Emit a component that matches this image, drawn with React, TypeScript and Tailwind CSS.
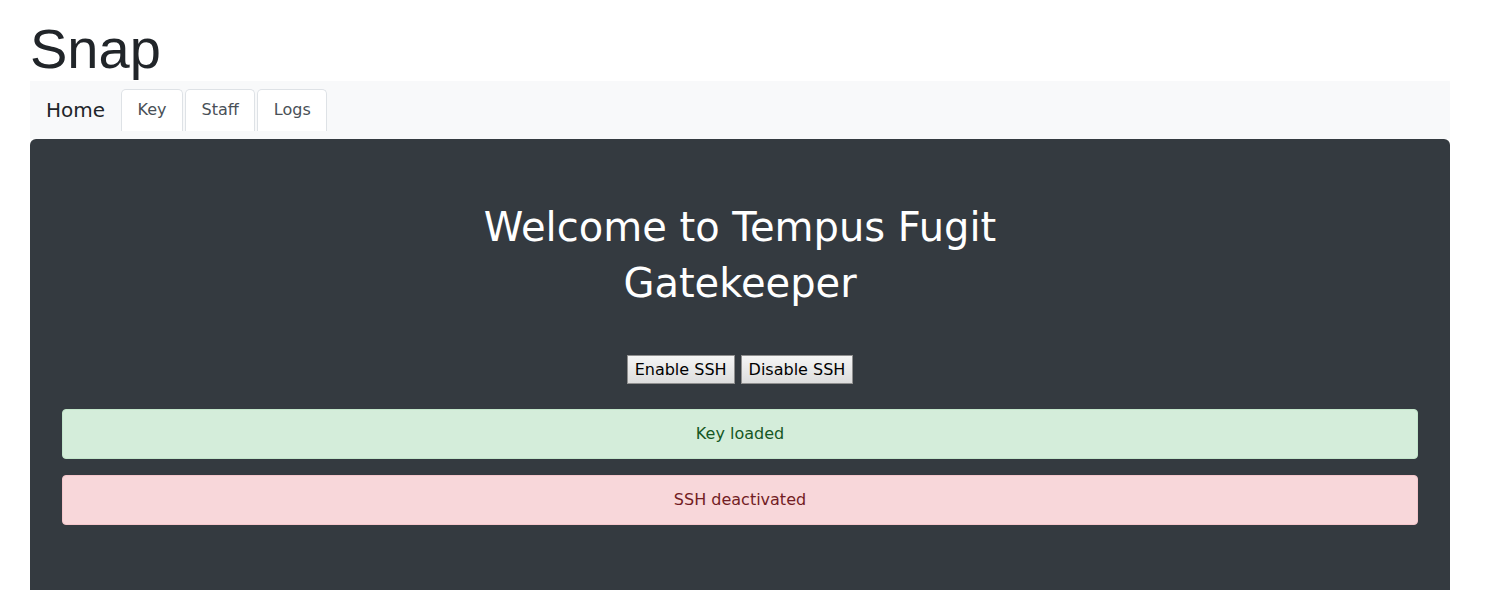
const tabs = ["Key", "Staff", "Logs"];

const SshButton = ({ label }: { label: string }) => (
  <button className="h-[29px] px-[7px] border border-[#8f8f8f] bg-gradient-to-b from-[#f5f5f5] to-[#dddddd] text-black text-[16px] leading-[19px]">
    {label}
  </button>
);

export default function App() {
  return (
    <div className="min-h-screen bg-white font-['DejaVu_Sans',sans-serif] text-[#212529]">
      <div className="ml-[30px] w-[1420px]">
        <h1 className="mt-[16px] font-['Liberation_Sans',Arial,sans-serif] text-[56px] leading-[65px] font-normal">
          Snap
        </h1>

        <nav className="flex items-end bg-[#f8f9fa] px-4 py-2">
          <span className="mr-4 self-center text-[20px] leading-[30px] text-[#212529]">
            Home
          </span>
          <div className="flex gap-[2px]">
            {tabs.map((t) => (
              <a
                key={t}
                href="#"
                className="rounded-t-[5px] border border-b-0 border-[#dee2e6] bg-white px-[15.5px] pt-[8px] pb-[9px] text-[16px] leading-[24px] text-[#495057]"
              >
                {t}
              </a>
            ))}
          </div>
        </nav>

        <main className="rounded-t-[6px] bg-[#343a40] px-8 pt-[60px] pb-[80px]">
          <h2 className="mx-auto max-w-[600px] text-center text-[40px] leading-[56px] font-normal text-white">
            Welcome to Tempus Fugit Gatekeeper
          </h2>

          <div className="mt-[44px] flex justify-center gap-[6px]">
            <SshButton label="Enable SSH" />
            <SshButton label="Disable SSH" />
          </div>

          <div className="mt-[25px] flex flex-col gap-4">
            <div className="rounded-[4px] border border-[#c3e6cb] bg-[#d4edda] py-3 text-center text-[16px] leading-[24px] text-[#155724]">
              Key loaded
            </div>
            <div className="rounded-[4px] border border-[#f5c6cb] bg-[#f8d7da] py-3 text-center text-[16px] leading-[24px] text-[#721c24]">
              SSH deactivated
            </div>
          </div>
        </main>
      </div>
    </div>
  );
}
